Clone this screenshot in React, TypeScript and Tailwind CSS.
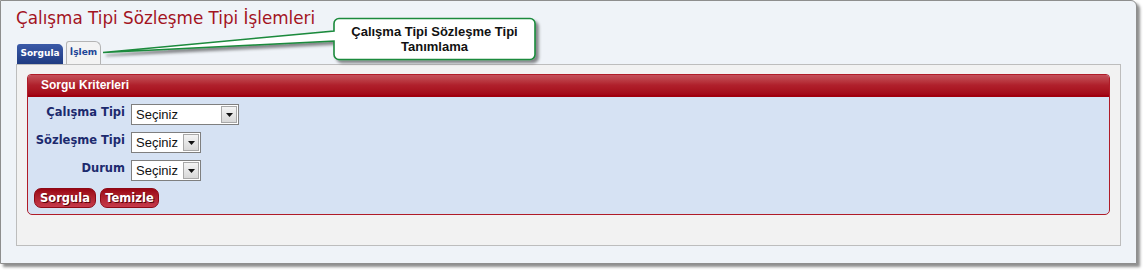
import React from 'react';

const labelCls =
  "w-[97px] shrink-0 text-right pt-[1px] font-['DejaVu_Sans',sans-serif] text-[11.5px] font-bold leading-[14px] text-[#1c2a6e]";

function Select({ width }: { width: string }) {
  return (
    <div className={`flex h-[21px] ${width} items-stretch border border-[#7f7f7f] bg-white`}>
      <span className="flex-1 pl-[4px] pt-[2px] font-['Liberation_Sans',sans-serif] text-[13px] leading-[16px] text-[#111]">
        Seçiniz
      </span>
      <span className="m-px flex w-[16px] items-center justify-center border border-[#a8a8a8] bg-gradient-to-b from-[#f4f4f4] to-[#d8d8d8]">
        <svg width="7" height="4" viewBox="0 0 7 4">
          <path d="M0 0h7L3.5 4z" fill="#111" />
        </svg>
      </span>
    </div>
  );
}

function RedButton({ label, width }: { label: string; width: string }) {
  return (
    <button
      className={`h-[20px] ${width} rounded-[7px] border border-[#8d0a16] bg-gradient-to-b from-[#9a0413] to-[#c7394a] font-['DejaVu_Sans',sans-serif] text-[11.5px] font-bold leading-[18px] text-white [text-shadow:1px_1px_0_#5a0008]`}
    >
      {label}
    </button>
  );
}

export default function App() {
  return (
    <div className="h-[273px] w-[1146px] bg-white">
      <div className="relative h-[264px] w-[1137px] rounded-tr-[6px] border border-[#8e8e8e] bg-[#eff3f8] shadow-[3px_3px_3px_rgba(0,0,0,0.45)]">
        <div className="pl-[15px] pt-[6px]">
          <h1 className="font-['DejaVu_Sans',sans-serif] text-[16.8px] leading-[22px] text-[#a3141f]">
            Çalışma Tipi Sözleşme Tipi İşlemleri
          </h1>

          {/* tabs */}
          <div className="mt-[12px] flex items-end gap-[3px] pl-[1px]">
            <div className="flex h-[20px] w-[46px] items-center justify-center rounded-tl-[3px] rounded-tr-[5px] bg-gradient-to-b from-[#3b5aa8] to-[#1f3b82] font-['DejaVu_Sans',sans-serif] text-[9px] font-bold text-white">
              Sorgula
            </div>
            <div className="flex h-[23px] w-[35px] items-center justify-center rounded-tl-[3px] rounded-tr-[6px] border border-b-0 border-[#b4b4b4] bg-[#f3f3f3] font-['DejaVu_Sans',sans-serif] text-[9px] font-bold text-[#1d4597]">
              İşlem
            </div>
          </div>

          {/* content frame */}
          <div className="h-[182px] w-[1105px] border border-[#bdbdbd] bg-[#f2f2f2] px-[10px] pt-[9px]">
            <div className="overflow-hidden rounded-tl-[4px] rounded-tr-[4px] rounded-b-[5px] border border-[#b01c28] bg-[#d6e2f3]">
              <div className="h-[22px] border-b-2 border-[#a0000e] bg-gradient-to-b from-[#c5505a] via-[#b0202c] to-[#a30716] pl-[13px] font-['Liberation_Sans',sans-serif] text-[12px] font-bold leading-[20px] text-white">
                Sorgu Kriterleri
              </div>
              <div className="flex flex-col gap-[7px] pb-[6px] pt-[7px]">
                <div className="flex gap-[6px]">
                  <div className={labelCls}>Çalışma Tipi</div>
                  <Select width="w-[108px]" />
                </div>
                <div className="flex gap-[6px]">
                  <div className={labelCls}>Sözleşme Tipi</div>
                  <Select width="w-[70px]" />
                </div>
                <div className="flex gap-[6px]">
                  <div className={labelCls}>Durum</div>
                  <Select width="w-[70px]" />
                </div>
                <div className="flex gap-[4px] pl-[6px]">
                  <RedButton label="Sorgula" width="w-[62px]" />
                  <RedButton label="Temizle" width="w-[59px]" />
                </div>
              </div>
            </div>
          </div>
        </div>

        {/* callout */}
        <svg className="pointer-events-none absolute left-0 top-0" width="560" height="70">
          <defs>
            <filter id="sh" x="-10%" y="-30%" width="130%" height="180%">
              <feDropShadow dx="3" dy="3" stdDeviation="1.5" floodColor="#000" floodOpacity="0.45" />
            </filter>
          </defs>
          <path
            d="M338 17.5H529a5 5 0 0 1 5 5V53.5a5 5 0 0 1 -5 5H338a5 5 0 0 1 -5 -5V40L102 51.5L333 30V22.5a5 5 0 0 1 5 -5Z"
            fill="#ffffff"
            stroke="#1b8a3c"
            strokeWidth="1.6"
            filter="url(#sh)"
          />
        </svg>
        <div className="absolute left-[333px] top-[18px] flex h-[40px] w-[201px] flex-col items-center justify-center font-['Liberation_Sans',sans-serif] text-[13px] font-bold leading-[15px] text-[#111]">
          <span>Çalışma Tipi Sözleşme Tipi</span>
          <span>Tanımlama</span>
        </div>
      </div>
    </div>
  );
}
